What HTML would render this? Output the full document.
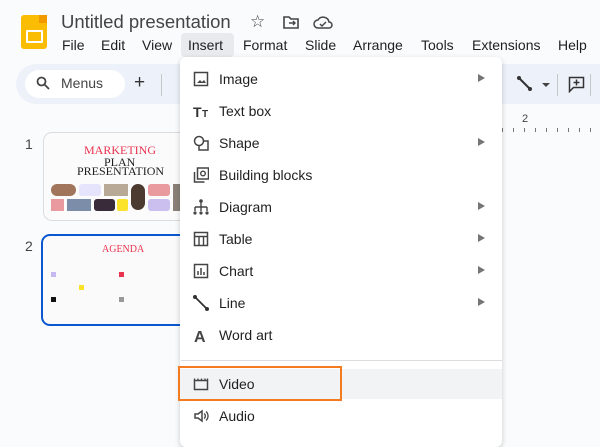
<!DOCTYPE html><html><head><style>
body{margin:0;width:600px;height:439px;overflow:hidden;background:#f9fbfd;font-family:"Liberation Sans",sans-serif;position:relative;color:#1f1f1f}
.a{position:absolute}
.m{font-size:14px;top:37px}
.it{position:absolute;left:0;width:322px;height:32px;font-size:14px;color:#1f1f1f}
.it span{position:absolute;left:39px;top:8px}
.it svg{position:absolute;left:13px;top:8px}
.ar{position:absolute;left:298px;top:11px;width:0;height:0;border-left:7px solid #757575;border-top:4px solid transparent;border-bottom:4px solid transparent}
</style></head><body>
<div class="a" style="left:21px;top:15px;width:26px;height:34px;background:#fbbc04;border-radius:3px"></div>
<div class="a" style="left:39px;top:15px;width:8px;height:8px;background:#f29900"></div>
<div class="a" style="left:26px;top:30px;width:13px;height:9px;border:2px solid #fff;border-radius:1px"></div>
<div class="a" style="left:61px;top:11px;font-size:18.5px;color:#444">Untitled presentation</div>
<div class="a" style="left:250px;top:12px;font-size:17px;color:#444">☆</div>
<svg class="a" style="left:283px;top:15px" width="16" height="14"><path d="M1 2h5l2 2h7v9H1z" fill="none" stroke="#444" stroke-width="1.6"/><path d="M6 8h6M10 6l2 2-2 2" stroke="#444" fill="none" stroke-width="1.4"/></svg>
<svg class="a" style="left:313px;top:16px" width="20" height="13"><path d="M5 12a4 4 0 010-8 6 6 0 0111 2 3 3 0 010 6z" fill="none" stroke="#444" stroke-width="1.5"/><path d="M7 8l2 2 4-4" fill="none" stroke="#444" stroke-width="1.4"/></svg>
<div class="a m" style="left:62px">File</div><div class="a m" style="left:101px">Edit</div><div class="a m" style="left:142px">View</div>
<div class="a" style="left:181px;top:33px;width:53px;height:24px;background:#e8eaed;border-radius:4px"></div>
<div class="a m" style="left:188px">Insert</div><div class="a m" style="left:243px">Format</div><div class="a m" style="left:305px">Slide</div><div class="a m" style="left:353px">Arrange</div><div class="a m" style="left:421px">Tools</div><div class="a m" style="left:472px">Extensions</div><div class="a m" style="left:558px">Help</div>
<div class="a" style="left:16px;top:64px;width:600px;height:40px;background:#edf2fa;border-radius:20px"></div>
<div class="a" style="left:25px;top:70px;width:100px;height:28px;background:#fff;border-radius:14px"></div>
<svg class="a" style="left:36px;top:76px" width="14" height="14"><circle cx="5.5" cy="5.5" r="4" fill="none" stroke="#444" stroke-width="1.8"/><path d="M8.5 8.5l4.5 4.5" stroke="#444" stroke-width="1.8"/></svg>
<div class="a" style="left:61px;top:75px;font-size:14px;color:#444">Menus</div>
<div class="a" style="left:134px;top:72px;font-size:19px;color:#333">+</div>
<div class="a" style="left:161px;top:74px;width:1px;height:22px;background:#c4c7c5"></div>
<svg class="a" style="left:517px;top:76px" width="16" height="16"><path d="M2 2l11 11" stroke="#333" stroke-width="2"/><circle cx="2" cy="2" r="2" fill="#333"/><circle cx="13" cy="13" r="2" fill="#333"/></svg>
<div class="a" style="left:542px;top:83px;border-top:4px solid #444;border-left:4px solid transparent;border-right:4px solid transparent"></div>
<div class="a" style="left:557px;top:74px;width:1px;height:22px;background:#c4c7c5"></div>
<svg class="a" style="left:568px;top:76px" width="17" height="17"><path d="M1.5 1.5h14v10h-10l-4 4z" fill="none" stroke="#333" stroke-width="1.5"/><path d="M8.5 3.5v6M5.5 6.5h6" stroke="#333" stroke-width="1.5"/></svg>
<div class="a" style="left:590px;top:74px;width:1px;height:22px;background:#c4c7c5"></div>
<div class="a" style="left:480px;top:112px;width:120px;height:20px;font-size:11px"><span class="a" style="left:42px;top:1px;color:#444">2</span><div class="a" style="left:0;top:16px;width:120px;height:4px;background:repeating-linear-gradient(90deg,#777 0 1px,transparent 1px 11px)"></div></div>
<div class="a" style="left:25px;top:136px;font-size:14px;color:#444">1</div>
<div class="a" style="left:25px;top:238px;font-size:14px;color:#444">2</div>
<div class="a" style="left:43px;top:132px;width:150px;height:87px;background:#fbfbfb;border:1px solid #dadce0;border-radius:9px;overflow:hidden">
<div class="a" style="left:40px;top:10px;font-family:'Liberation Serif',serif;font-size:12px;color:#e8334f">MARKETING</div>
<div class="a" style="left:60px;top:22px;font-family:'Liberation Serif',serif;font-size:12px">PLAN</div>
<div class="a" style="left:33px;top:31px;font-family:'Liberation Serif',serif;font-size:12px">PRESENTATION</div>
<div class="a" style="left:7px;top:51px;width:25px;height:12px;background:#a0755b;border-radius:6px"></div>
<div class="a" style="left:35px;top:51px;width:22px;height:12px;background:#e6e4fc;border-radius:3px"></div>
<div class="a" style="left:60px;top:51px;width:24px;height:12px;background:#b8a896"></div>
<div class="a" style="left:87px;top:51px;width:14px;height:26px;background:#4a3a30;border-radius:7px"></div>
<div class="a" style="left:104px;top:51px;width:22px;height:12px;background:#e89a9f;border-radius:3px"></div>
<div class="a" style="left:104px;top:66px;width:22px;height:12px;background:#cbbff0;border-radius:3px"></div>
<div class="a" style="left:129px;top:51px;width:20px;height:27px;background:#8a8078"></div>
<div class="a" style="left:7px;top:66px;width:13px;height:12px;background:#e89a9f"></div>
<div class="a" style="left:23px;top:66px;width:24px;height:12px;background:#7b8da8"></div>
<div class="a" style="left:50px;top:66px;width:21px;height:12px;background:#3a2b3b;border-radius:3px"></div>
<div class="a" style="left:73px;top:66px;width:11px;height:12px;background:#fae32a;border-radius:2px"></div>
</div>
<div class="a" style="left:41px;top:234px;width:150px;height:88px;background:#fafafa;border:2px solid #0b57d0;border-radius:9px;overflow:hidden">
<div class="a" style="left:59px;top:8px;font-family:'Liberation Serif',serif;font-size:10px;color:#e8334f">AGENDA</div>
<div class="a" style="left:8px;top:36px;width:5px;height:5px;background:#c6b8f0"></div>
<div class="a" style="left:76px;top:36px;width:5px;height:5px;background:#e8334f"></div>
<div class="a" style="left:36px;top:49px;width:5px;height:5px;background:#fae32a"></div>
<div class="a" style="left:8px;top:61px;width:5px;height:5px;background:#111"></div>
<div class="a" style="left:76px;top:61px;width:5px;height:5px;background:#999"></div>
</div>
<div class="a" style="left:180px;top:57px;width:322px;height:390px;background:#fff;border-radius:6px;box-shadow:0 2px 6px rgba(0,0,0,.2)">
<div class="it" style="top:6px"><svg width="16" height="16"><rect x="1.5" y="1.5" width="13" height="13" fill="none" stroke="#444" stroke-width="1.5"/><path d="M4 12l3-3 2 2 2-2 2 3z" fill="#444"/></svg><span>Image</span><i class="ar"></i></div>
<div class="it" style="top:38px"><svg width="18" height="16"><text x="0" y="14" font-size="14" font-weight="bold" fill="#333" font-family="Liberation Sans">T</text><text x="9" y="14" font-size="10" font-weight="bold" fill="#333" font-family="Liberation Sans">T</text></svg><span>Text box</span></div>
<div class="it" style="top:70px"><svg width="16" height="16"><circle cx="6" cy="6" r="4.5" fill="none" stroke="#444" stroke-width="1.5"/><path d="M11 6h4v9H6v-4" fill="none" stroke="#444" stroke-width="1.5"/></svg><span>Shape</span><i class="ar"></i></div>
<div class="it" style="top:102px"><svg width="16" height="16"><rect x="4.5" y="1" width="11" height="11" fill="none" stroke="#444" stroke-width="1.5"/><circle cx="10" cy="6.5" r="2.3" fill="none" stroke="#444" stroke-width="1.4"/><path d="M1.5 5v10h10" fill="none" stroke="#444" stroke-width="1.5"/></svg><span>Building blocks</span></div>
<div class="it" style="top:134px"><svg width="16" height="16"><circle cx="8" cy="2" r="1.8" fill="#444"/><path d="M8 3v5M2 8h12M2 8v4M8 8v4M14 8v4" stroke="#444" stroke-width="1.4" fill="none"/><circle cx="2" cy="14" r="1.6" fill="#444"/><circle cx="8" cy="14" r="1.6" fill="#444"/><circle cx="14" cy="14" r="1.6" fill="#444"/></svg><span>Diagram</span><i class="ar"></i></div>
<div class="it" style="top:166px"><svg width="16" height="16"><rect x="1.5" y="1.5" width="13" height="13" fill="none" stroke="#444" stroke-width="1.5"/><path d="M1.5 5.5h13M6 5.5v9M10.5 5.5v9" stroke="#444" stroke-width="1.4"/></svg><span>Table</span><i class="ar"></i></div>
<div class="it" style="top:198px"><svg width="16" height="16"><rect x="1.5" y="1.5" width="13" height="13" fill="none" stroke="#444" stroke-width="1.5"/><path d="M5 12V8M8 12V5M11 12V9" stroke="#444" stroke-width="1.5"/></svg><span>Chart</span><i class="ar"></i></div>
<div class="it" style="top:230px"><svg width="16" height="16"><path d="M2 2l12 12" stroke="#333" stroke-width="1.8"/><circle cx="2" cy="2" r="2" fill="#333"/><circle cx="14" cy="14" r="2" fill="#333"/></svg><span>Line</span><i class="ar"></i></div>
<div class="it" style="top:262px"><svg width="16" height="16"><text x="1" y="15" font-size="16" font-weight="bold" fill="#444" font-family="Liberation Sans">A</text></svg><span>Word art</span></div>
<div class="a" style="left:1px;top:303px;width:321px;height:1px;background:#dadce0"></div>
<div class="a" style="left:0;top:312px;width:322px;height:30px;background:#f1f3f4"></div>
<div class="it" style="top:311px"><svg width="16" height="16"><rect x="1.5" y="4.5" width="13" height="9" fill="none" stroke="#444" stroke-width="1.5"/><path d="M1.5 2.5v2M5 2.5v2M8.5 2.5v2M12 2.5v2M14.5 2.5v2" stroke="#444" stroke-width="1.3"/></svg><span>Video</span></div>
<div class="it" style="top:343px"><svg width="16" height="16"><path d="M2 6h3l4-3v10l-4-3H2z" fill="none" stroke="#444" stroke-width="1.5"/><path d="M11 5.5a3 3 0 010 5M13 3.5a6 6 0 010 9" fill="none" stroke="#444" stroke-width="1.3"/></svg><span>Audio</span></div>
</div>
<div class="a" style="left:178px;top:366px;width:160px;height:31px;border:2px solid #f47b20"></div>
</body></html>
